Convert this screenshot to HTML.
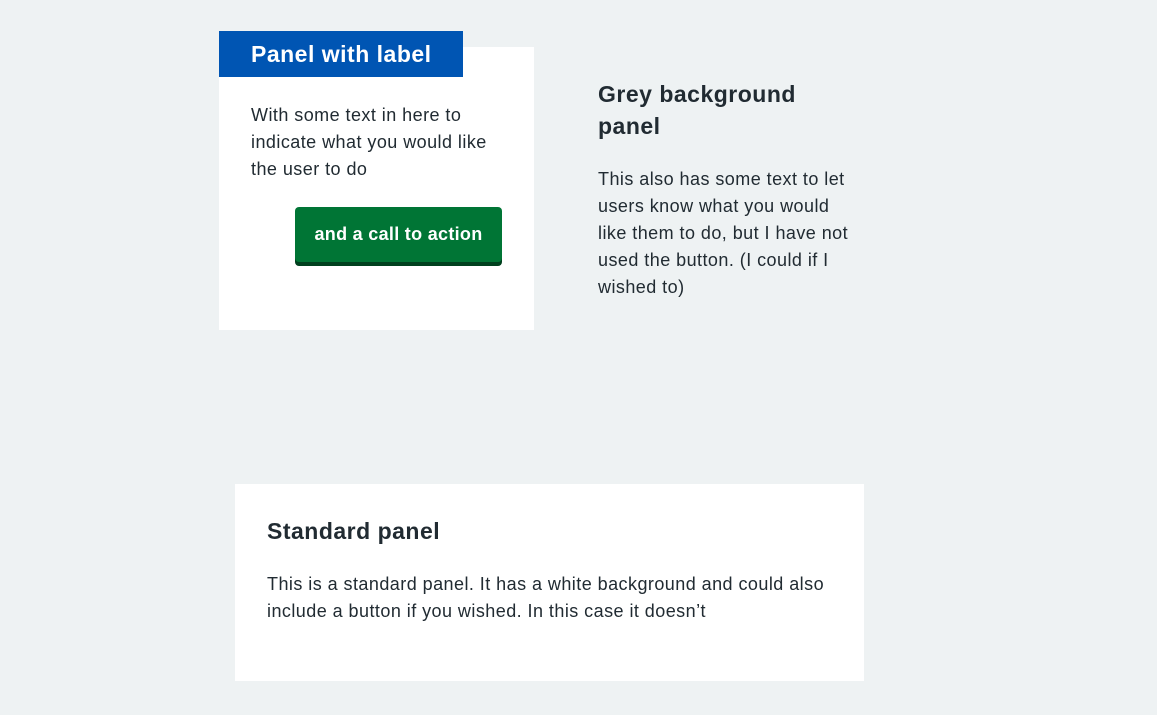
<!DOCTYPE html>
<html><head><style>
body{margin:0;width:1157px;height:715px;background:#eef2f3;font-family:"Liberation Sans",Arial,sans-serif;color:#212b32;position:relative;overflow:hidden}
.p{position:absolute;background:#fff}
.t{position:absolute;font-size:18px;line-height:27px;margin:0;letter-spacing:0.45px;white-space:nowrap}
h3{position:absolute;margin:0;font-size:23px;line-height:32px;font-weight:bold;letter-spacing:0.5px;white-space:nowrap}
</style></head><body>
<div class="p" style="left:219px;top:47px;width:315px;height:283px"></div>
<div style="position:absolute;left:219px;top:31px;width:244px;height:46px;background:#0055b3;color:#fff;font-weight:bold;font-size:23px;line-height:46px;box-sizing:border-box;padding-left:32px;letter-spacing:0.5px">Panel with label</div>
<p class="t" style="left:251px;top:102px">With some text in here to<br>indicate what you would like<br>the user to do</p>
<div style="position:absolute;left:295px;top:207px;width:207px;height:55px;background:#007535;border-radius:4px;box-shadow:0 4px 0 #00401e;color:#fff;font-weight:bold;font-size:18px;line-height:55px;text-align:center;letter-spacing:0.3px">and a call to action</div>
<h3 style="left:598px;top:78px">Grey background<br>panel</h3>
<p class="t" style="left:598px;top:166px">This also has some text to let<br>users know what you would<br>like them to do, but I have not<br>used the button. (I could if I<br>wished to)</p>
<div class="p" style="left:235px;top:484px;width:629px;height:197px"></div>
<h3 style="left:267px;top:515px">Standard panel</h3>
<p class="t" style="left:267px;top:571px">This is a standard panel. It has a white background and could also<br>include a button if you wished. In this case it doesn’t</p>
</body></html>
